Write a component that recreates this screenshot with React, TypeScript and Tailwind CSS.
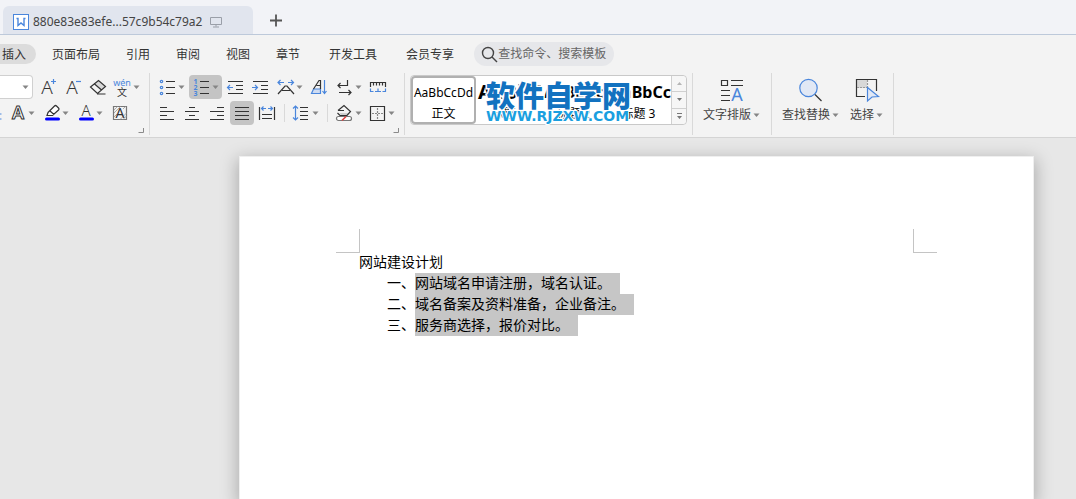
import React from "react";
import clsx from "clsx";

const menuItems = ["页面布局", "引用", "审阅", "视图", "章节"];
const extraMenuItems = ["开发工具", "会员专享"];

const listItems = [
  { marker: "一、", text: "网站域名申请注册，域名认证。" },
  { marker: "二、", text: "域名备案及资料准备，企业备注。" },
  { marker: "三、", text: "服务商选择，报价对比。" },
];

const headingStyles = [
  { label: "标题 1", sample: "pl-[2px] text-[20px]" },
  { label: "标题 2", sample: "pl-px text-[16px]" },
  { label: "标题 3", sample: "pl-[5px] text-[16px]" },
];

const DARK = "#333333";
const BLUE = "#4a86dc";

const Caret: React.FC = () => (
  <svg width="8" height="8" viewBox="0 0 8 8" className="shrink-0">
    <path d="M.5 2.500h6l-3 3.500z" fill="#858585" />
  </svg>
);

interface ToolButtonProps {
  label: string;
  caret?: boolean;
  className?: string;
  children: React.ReactNode;
}

const ToolButton: React.FC<ToolButtonProps> = ({
  label,
  caret,
  className,
  children,
}) => {
  return (
    <button
      type="button"
      aria-label={label}
      className={clsx("flex h-6 shrink-0 items-center rounded", className)}
    >
      <svg
        width="20"
        height="24"
        viewBox="0 0 20 24"
        fill="none"
        stroke={DARK}
        strokeWidth="1.2"
        className="shrink-0 overflow-visible"
      >
        {children}
      </svg>
      {caret && <Caret />}
    </button>
  );
};

interface LetterProps {
  x: number;
  y: number;
  size: number;
  color?: string;
  weight?: number;
  children: string;
}

const Letter: React.FC<LetterProps> = ({
  x,
  y,
  size,
  color = DARK,
  weight = 400,
  children,
}) => (
  <text
    x={x}
    y={y}
    fontSize={size}
    fontWeight={weight}
    fill={color}
    stroke="none"
    textAnchor="middle"
  >
    {children}
  </text>
);

const Divider: React.FC = () => (
  <span className="mx-[2px] h-[18px] w-px shrink-0 bg-[#d9d9d9]" />
);

const Launcher: React.FC<{ label: string }> = ({ label }) => (
  <div className="-mr-[3px] flex justify-end">
    <button type="button" aria-label={label} className="h-[6px] w-[6px]">
      <svg width="6" height="6" viewBox="0 0 6 6" className="block">
        <path d="M5.500 1v4.500H.5" fill="none" stroke="#8a8a8a" />
      </svg>
    </button>
  </div>
);

const TabBar: React.FC = () => {
  return (
    <header className="flex h-[35px] items-end border-b border-[#bdc9da] bg-[#f2f3f7] pl-[3px]">
      <button
        type="button"
        className="flex h-7 w-[250px] items-center rounded-t-md bg-[#e1e5ee] pt-[3px] pl-[10px]"
      >
        <svg width="16" height="16" viewBox="0 0 16 16" className="shrink-0">
          <rect x="0.5" y="0.5" width="15" height="15" fill="#fff" stroke={BLUE} />
          <path
            d="M3.500 4.500h1.500v7l3-2.500 3 2.500v-7h1.500"
            fill="none"
            stroke={BLUE}
            strokeWidth="1.400"
          />
        </svg>
        <span className="ml-1 text-[12px] text-[#444]">
          880e83e83efe...57c9b54c79a2
        </span>
        <svg
          width="12"
          height="12"
          viewBox="0 0 12 12"
          fill="none"
          stroke="#9a9fa8"
          className="ml-2 shrink-0"
        >
          <path d="M.5 1.500h11v7H.5zM6 8.500v2M3 11h6" />
        </svg>
      </button>
      <button type="button" aria-label="新建" className="ml-4 h-[27px] w-[14px]">
        <svg width="14" height="27" viewBox="0 0 14 27" className="block">
          <path d="M1 13.500h12M7 7.500v12" stroke="#555" strokeWidth="1.8" />
        </svg>
      </button>
    </header>
  );
};

const MenuBar: React.FC = () => {
  return (
    <nav className="flex h-[38px] items-center text-[12px] text-[#333]">
      <button
        type="button"
        className="h-5 shrink-0 rounded-r-full bg-[#dcdcdc] pt-[2px] pr-[10px] pl-[2px] leading-[18px]"
      >
        插入
      </button>
      <div className="ml-4 flex shrink-0 gap-[26px]">
        {menuItems.map((item) => (
          <button key={item} type="button" className="pt-[2px]">
            {item}
          </button>
        ))}
      </div>
      <div className="ml-[29px] flex shrink-0 gap-[29px]">
        {extraMenuItems.map((item) => (
          <button key={item} type="button" className="pt-[2px]">
            {item}
          </button>
        ))}
      </div>
      <label className="ml-5 flex h-6 w-[140px] shrink-0 items-center rounded-full bg-[#e6e7ea] pl-[7px]">
        <svg
          width="17"
          height="17"
          viewBox="0 0 17 17"
          fill="none"
          stroke="#444"
          strokeWidth="1.4"
          className="shrink-0"
        >
          <circle cx="7" cy="7" r="5.500" />
          <path d="M11 11l5 5" />
        </svg>
        <input
          type="text"
          aria-label="查找命令"
          placeholder="查找命令、搜索模板"
          className="w-[112px] min-w-0 bg-transparent outline-none placeholder:text-[#666]"
        />
      </label>
    </nav>
  );
};

const FontGroup: React.FC = () => {
  return (
    <section className="flex h-[62px] shrink-0 flex-col gap-[2px] border-r border-[#d9d9d9] pt-[2px] pr-2">
      <div className="flex items-center gap-[5px]">
        <div className="flex h-6 w-[33px] items-center justify-end rounded-r border border-l-0 border-[#d0d0d0] bg-white pr-[2px]">
          <select
            aria-label="字号"
            className="h-full w-[22px] appearance-none bg-transparent outline-none"
          />
          <Caret />
        </div>
        <ToolButton label="增大字号">
          <Letter x={9} y={19} size={19} weight={300}>A</Letter>
          <path d="M13 6.500h5M15.500 4v5" stroke={BLUE} />
        </ToolButton>
        <ToolButton label="减小字号">
          <Letter x={9} y={19} size={19} weight={300}>A</Letter>
          <path d="M13 6.500h5" stroke={BLUE} />
        </ToolButton>
        <ToolButton label="清除格式">
          <path d="M6.500 8.500L11 5.500l6.500 6-4 4z" fill="#d8d8d8" stroke="none" />
          <path d="M2.500 12L10.500 5.500l7 6L9.500 18.500zM6 8.500l7.500 6.500M9 19h8.500" />
        </ToolButton>
        <ToolButton label="拼音指南" caret>
          <Letter x={9} y={11} size={9} color={BLUE}>wén</Letter>
          <Letter x={9} y={21} size={10}>文</Letter>
        </ToolButton>
      </div>
      <div className="flex items-center gap-[6px]">
        <button type="button" aria-label="上标" className="h-6 w-[2px]">
          <svg width="2" height="24" viewBox="0 0 2 24" className="block">
            <path d="M0 13h1.500M0 18h1.500" stroke={BLUE} />
          </svg>
        </button>
        <ToolButton label="文字效果" caret>
          <text
            x="10"
            y="18"
            fontSize="18"
            fontWeight="600"
            fill="#fff"
            stroke={DARK}
            strokeWidth="1"
            textAnchor="middle"
          >
            A
          </text>
        </ToolButton>
        <ToolButton label="突出显示" caret>
          <path d="M6 11.500l6.500-6.500q1-1 2 0l2 2q1 1 0 2L10.500 14.500H5l1-3zM8 10l4 3.500" fill="#fff" />
          <path d="M4.500 18h12" stroke="#0000ff" strokeWidth="3" strokeLinecap="round" />
        </ToolButton>
        <ToolButton label="字体颜色" caret>
          <Letter x={10} y={15} size={15} weight={300}>A</Letter>
          <path d="M4.500 18h12" stroke="#0000ff" strokeWidth="3" strokeLinecap="round" />
        </ToolButton>
        <ToolButton label="字符底纹">
          <path d="M3.500 5.500h13v13h-13z" stroke="#777" />
          <path d="M4 9l3.500-3.500M4 12l6.500-6.500M10 18.500l6.500-6.500M13 18.500l3.500-3.500M4 16l3-3M13 8l2.500-2.500" stroke="#999" strokeWidth="0.8" />
          <Letter x={10} y={17} size={14}>A</Letter>
        </ToolButton>
      </div>
      <Launcher label="字体设置" />
    </section>
  );
};

const ParagraphGroup: React.FC = () => {
  return (
    <section className="flex h-[62px] shrink-0 flex-col gap-[2px] border-r border-[#d9d9d9] pt-[2px] pr-2 pl-[7px]">
      <div className="flex items-center gap-[5px]">
        <ToolButton label="项目符号" caret className="pl-px">
          <g stroke={BLUE}>
            <circle cx="3.500" cy="6.500" r="1.200" />
            <circle cx="3.500" cy="12.500" r="1.200" />
            <circle cx="3.500" cy="18.500" r="1.200" />
          </g>
          <path d="M8 6.500h9M8 12.500h9M8 18.500h9" />
        </ToolButton>
        <ToolButton label="编号" caret className="-mx-[2px] bg-[#c4c4c4] pr-[2px] pl-[3px]">
          <Letter x={3.5} y={9} size={7} color={BLUE} weight={700}>1</Letter>
          <Letter x={3.5} y={15} size={7} color={BLUE} weight={700}>2</Letter>
          <Letter x={3.5} y={21} size={7} color={BLUE} weight={700}>3</Letter>
          <path d="M8 6.500h9M8 12.500h9M8 18.500h9" />
        </ToolButton>
        <ToolButton label="减少缩进量">
          <path d="M3 6.500h15M11 10.500h7M11 14.500h7M3 18.500h15" />
          <path d="M8 12.500H2.500M5 10l-2.500 2.500L5 15" stroke={BLUE} />
        </ToolButton>
        <ToolButton label="增加缩进量">
          <path d="M3 6.500h15M11 10.500h7M11 14.500h7M3 18.500h15" />
          <path d="M2 12.500h5.500M5 10l2.500 2.500L5 15" stroke={BLUE} />
        </ToolButton>
        <ToolButton label="中文版式" caret className="pl-px">
          <path d="M2 19l7-8h2l7 8M6 15.500h8" />
          <path d="M8 7.500H2M4.500 5L2 7.500 4.500 10M12 7.500h5.500M15 5l2.500 2.500L15 10" stroke={BLUE} />
        </ToolButton>
        <ToolButton label="排序">
          <path d="M4.500 14h7v4.500h-9z" fill="#cfdcf2" stroke={BLUE} />
          <path d="M4.500 14l5.500-8.500h1.500V14M7.500 10.500h4" />
          <path d="M15.500 5v13.500M13.500 16l2 2.500 2-2.500" stroke={BLUE} />
        </ToolButton>
        <ToolButton label="显示段落标记" caret className="pl-px">
          <path d="M12.500 5v5.500H3M5.500 8L3 10.500 5.500 13M4 17.500h12M13.500 15l2.500 2.500-2.500 2.500" />
        </ToolButton>
        <ToolButton label="制表位">
          <path d="M2.500 12V7.500h15V12M5.500 8v2.500M8.500 8v2.500M11.500 8v2.500M14.500 8v2.500" />
          <path d="M2.500 13.500v3h3M7 16.500h6M10 13.500v3M17.500 13.500v3h-3" stroke={BLUE} />
        </ToolButton>
      </div>
      <div className="flex items-center gap-[5px]">
        <ToolButton label="左对齐">
          <path d="M3 6.500h7M3 10.500h14M3 14.500h7M3 18.500h14" />
        </ToolButton>
        <ToolButton label="居中对齐">
          <path d="M7 6.500h6M3 10.500h14M7 14.500h6M3 18.500h14" />
        </ToolButton>
        <ToolButton label="右对齐">
          <path d="M10 6.500h7M3 10.500h14M10 14.500h7M3 18.500h14" />
        </ToolButton>
        <ToolButton label="两端对齐" className="-mx-[2px] bg-[#c4c4c4] px-[2px]">
          <path d="M3 6.500h14M3 10.500h14M3 14.500h14M3 18.500h14" />
        </ToolButton>
        <ToolButton label="分散对齐">
          <path d="M2.500 6v13M17.500 6v13M5 13.500h10M5 17.500h10" />
          <path d="M9 7.500H4.500M6.500 5.500l-2 2 2 2M11 7.500h4.500M13.500 5.500l2 2-2 2" stroke={BLUE} />
        </ToolButton>
        <Divider />
        <ToolButton label="行距" caret>
          <path d="M3.500 5v14M1 7.500L3.500 5 6 7.500M1 16.500L3.500 19 6 16.500" stroke={BLUE} />
          <path d="M8 6.500h8M8 10.500h8M8 14.500h8M8 18.500h8" />
        </ToolButton>
        <Divider />
        <ToolButton label="底纹颜色" caret>
          <path d="M4.500 12h10l-3 2.500h-5z" fill="#d0d0d0" stroke="none" />
          <path d="M3 9.500L9 4.500l6.500 6L12 14.500H5L2.500 12M3 9.500h6" />
          <rect x="1.500" y="15.500" width="15" height="4" rx="2" fill="#fff" stroke="#777" />
          <path d="M7 19.500l4-4" stroke="#e04343" strokeWidth="1.600" />
        </ToolButton>
        <ToolButton label="边框" caret>
          <path d="M2.500 5.500h14v14h-14z" />
          <path d="M9.500 7v12M4 12.500h12" stroke="#888" strokeDasharray="2 1" />
        </ToolButton>
      </div>
      <Launcher label="段落设置" />
    </section>
  );
};

const StyleGallery: React.FC = () => {
  return (
    <section className="flex h-[62px] shrink-0 items-start border-r border-[#d9d9d9] px-[5px] pt-[2px]">
      <div className="relative flex h-[50px] rounded border border-[#c9c9c9] bg-white">
        <button
          type="button"
          className="flex w-[65px] flex-col items-center justify-between rounded-sm border-2 border-[#b0b0b0] text-black"
        >
          <span className="pt-[5px] text-[12px] leading-5">AaBbCcDd</span>
          <span className="text-[12px] leading-4">正文</span>
        </button>
        {headingStyles.map((style) => (
          <button
            key={style.label}
            type="button"
            className="flex w-[65px] flex-col justify-between overflow-hidden py-[2px] text-black"
          >
            <span
              className={clsx(
                "pt-[4px] leading-5 font-bold whitespace-nowrap",
                style.sample
              )}
            >
              AaBbCc
            </span>
            <span className="w-full text-center text-[12px] leading-4">
              {style.label}
            </span>
          </button>
        ))}
        <div className="flex w-[15px] flex-col divide-y divide-[#d0d0d0] rounded-r border-l border-[#d0d0d0] bg-[#f6f6f6]">
          <button type="button" aria-label="上一行" className="flex flex-1 items-center justify-center">
            <svg width="5" height="3" viewBox="0 0 5 3">
              <path d="M0 3h5L2.500 0z" fill="#b5b5b5" />
            </svg>
          </button>
          <button type="button" aria-label="下一行" className="flex flex-1 items-center justify-center">
            <svg width="5" height="3" viewBox="0 0 5 3">
              <path d="M0 0h5L2.500 3z" fill="#777" />
            </svg>
          </button>
          <button type="button" aria-label="更多样式" className="flex flex-1 items-center justify-center">
            <svg width="5" height="6" viewBox="0 0 5 6">
              <path d="M0 0h5v1H0zM0 3h5L2.500 6z" fill="#777" />
            </svg>
          </button>
        </div>
        {/* site mark floating over the gallery */}
        <div className="pointer-events-none absolute top-[4px] left-[75px] whitespace-nowrap">
          <p className="text-[29px] leading-[31px] font-black text-[#1272c0] [paint-order:stroke_fill] [-webkit-text-stroke:3px_white]">
            软件自学网
          </p>
          <p className="font-['DejaVu_Sans'] text-[14px] leading-[10px] font-bold text-[#1a9fe0] [paint-order:stroke_fill] [-webkit-text-stroke:2px_white]">
            WWW.RJZXW.COM
          </p>
        </div>
      </div>
    </section>
  );
};

interface LargeButtonProps {
  label: string;
  children: React.ReactNode;
}

const LargeButton: React.FC<LargeButtonProps> = ({ label, children }) => (
  <button type="button" className="flex shrink-0 flex-col items-center">
    <svg
      width="24"
      height="26"
      viewBox="0 0 24 26"
      fill="none"
      stroke={DARK}
      strokeWidth="1.2"
      className="overflow-visible"
    >
      {children}
    </svg>
    <span className="mt-1 flex items-center gap-[2px] text-[12px] leading-4 text-[#444]">
      {label}
      <Caret />
    </span>
  </button>
);

const Ribbon: React.FC = () => {
  return (
    <div className="flex border-b border-[#d4d4d4] pb-[2px]">
      <FontGroup />
      <ParagraphGroup />
      <StyleGallery />
      <section className="flex h-[62px] shrink-0 items-start border-r border-[#d9d9d9] px-[10px] pt-1">
        <LargeButton label="文字排版">
          <path d="M1.500 3.500h6v5h-6zM11 3.500h12M11 8.500h12M1 13.500h9M1 18.500h9M1 23.500h9" />
          <Letter x={17} y={24} size={18} color={BLUE}>A</Letter>
        </LargeButton>
      </section>
      <section className="flex h-[62px] shrink-0 items-start gap-[10px] border-r border-[#d9d9d9] pt-1 pr-[9px] pl-[10px]">
        <LargeButton label="查找替换">
          <circle cx="9.500" cy="11" r="8.700" fill="#e1e8f5" stroke={BLUE} />
          <path d="M16 17.500l6.500 6.500" />
        </LargeButton>
        <LargeButton label="选择">
          <path d="M2 3h10v8H2z" fill="#d8d8d8" stroke="none" />
          <path d="M10 19.500H1.500v-17h20V14" />
          <path d="M12.500 3v8M2 10.500h10" stroke="#999" strokeDasharray="2 1" />
          <path d="M12.500 10.500l11 9-6.500.5-4.500 4z" fill="#e1e8f5" stroke={BLUE} />
        </LargeButton>
      </section>
    </div>
  );
};

const DocumentPage: React.FC = () => {
  return (
    <article className="mt-[18px] mr-[42px] ml-[239px] flex-1 border border-b-0 border-[#efefef] bg-white px-[96px] pt-[72px] shadow-[0_5px_16px_2px_rgba(0,0,0,0.25)]">
      <div className="flex justify-between">
        <span className="h-6 w-6 border-r border-b border-[#c4c4c4]" />
        <span className="h-6 w-6 border-b border-l border-[#c4c4c4]" />
      </div>
      <div className="-mt-px px-[23px] font-['Liberation_Sans','Noto_Sans_CJK_SC',sans-serif] text-[14px] leading-[21px] text-black">
        <p>网站建设计划</p>
        <ol className="pl-7">
          {listItems.map((item) => (
            <li key={item.marker} className="flex">
              <span className="w-7 shrink-0">{item.marker}</span>
              <span className="bg-[#c6c6c6] pr-[9px]">{item.text}</span>
            </li>
          ))}
        </ol>
      </div>
    </article>
  );
};

const App: React.FC = () => {
  return (
    <div className="flex min-h-screen flex-col overflow-hidden bg-[#e7e7e7] font-['Noto_Sans','Noto_Sans_CJK_SC',sans-serif]">
      <TabBar />
      <div className="bg-[#f3f3f3]">
        <MenuBar />
        <Ribbon />
      </div>
      <DocumentPage />
    </div>
  );
};

export default App;
